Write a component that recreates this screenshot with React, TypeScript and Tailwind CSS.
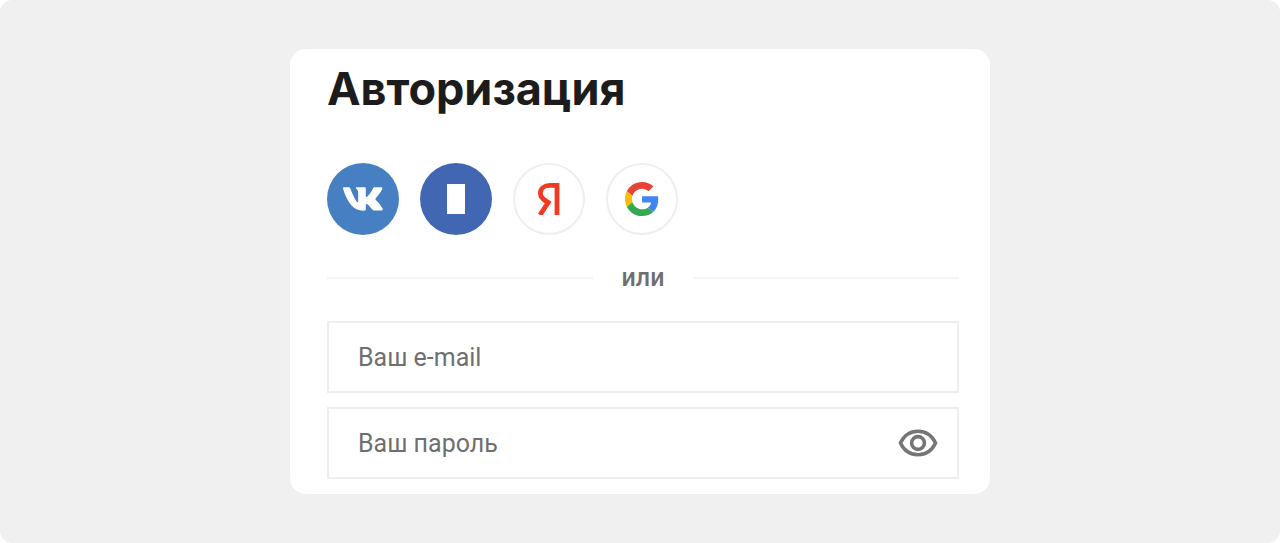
import { useState } from 'react';

const fieldClass =
  'block w-full h-[72px] border-2 border-[#eeeeee] bg-white pl-[29px] pr-20 text-[25px] text-[#6f6f6f] placeholder:text-[#6f6f6f] outline-none focus:border-[#cfcfcf]';

function VkIcon() {
  return (
    <svg className="w-10 h-6" viewBox="0 0 40 24" fill="#fff" aria-hidden="true">
      <path d="M0.8 0.3H5.6C6.6 0.3 7 0.8 7.4 1.8C9.2 6.6 11.6 11.6 13.4 14.2C14.4 15.6 15.2 15.4 15.2 13.8V5.8C15.2 3.2 14 2.6 13 1.6C12.4 1 12.8 0.3 13.8 0.3H21.4C22.4 0.3 22.8 0.8 22.8 1.8V9C22.8 10.2 23.6 10.4 24.4 9.6C26.6 7.2 28.6 4.2 30 1.4C30.4 0.6 30.8 0.3 31.6 0.3H38C39.4 0.3 39.6 1 39.2 2C38.2 4.4 35.8 7.8 33 11C32.2 12 32.2 12.4 33 13.2C35.4 15.4 38 18.6 39.4 21C40.2 22.6 39.6 23.6 38 23.6H31.8C30.4 23.6 29.8 23.2 28.8 22C27.4 20.2 25.6 18 24.2 17.2C23.2 16.8 22.8 17.2 22.8 18.4V22C22.8 23.2 22.2 23.7 20.6 23.7C15.2 23.7 10.6 21.6 7 16.6C4 12.4 1.4 7 0.2 2C-0.2 0.8 0 0.3 0.8 0.3Z" />
    </svg>
  );
}

function YandexIcon() {
  return (
    <svg className="w-6 h-8" viewBox="0 0 24 32" fill="none" stroke="#f23a22" aria-hidden="true">
      <path d="M20 32V2.4H13C7.2 2.4 3.4 5.4 3.4 10.2C3.4 13.6 5.2 15.6 8.4 17.6L11.2 19.4L3 32" strokeWidth="4.8" />
    </svg>
  );
}

function GoogleIcon() {
  return (
    <svg className="w-[34px] h-[34px]" viewBox="0 0 48 48" aria-hidden="true">
      <path fill="#ea4335" d="M24 9.5c3.54 0 6.71 1.22 9.21 3.6l6.85-6.85C35.9 2.38 30.47 0 24 0 14.62 0 6.51 5.38 2.56 13.22l7.98 6.19C12.43 13.72 17.74 9.5 24 9.5z" />
      <path fill="#4285f4" d="M46.98 24.55c0-1.57-.15-3.09-.38-4.55H24v9.02h12.94c-.58 2.96-2.26 5.48-4.78 7.18l7.73 6c4.51-4.18 7.09-10.36 7.09-17.65z" />
      <path fill="#fbbc05" d="M10.53 28.59c-.48-1.45-.76-2.99-.76-4.59s.27-3.14.76-4.59l-7.98-6.19C.92 16.46 0 20.12 0 24c0 3.88.92 7.54 2.56 10.78l7.97-6.19z" />
      <path fill="#34a853" d="M24 48c6.48 0 11.93-2.13 15.89-5.81l-7.73-6c-2.15 1.45-4.92 2.3-8.16 2.3-6.26 0-11.57-4.22-13.47-9.91l-7.98 6.19C6.51 42.62 14.62 48 24 48z" />
    </svg>
  );
}

function EyeIcon() {
  return (
    <svg className="w-10 h-7" viewBox="0 0 40 28" fill="none" stroke="#757575" strokeWidth="3.6" aria-hidden="true">
      <path d="M2.4 14C6 6.6 12.4 2.2 20 2.2S34 6.6 37.6 14C34 21.4 27.6 25.8 20 25.8S6 21.4 2.4 14Z" strokeLinejoin="round" />
      <circle cx="20" cy="14" r="6.4" />
    </svg>
  );
}

const providers = [
  { name: 'VK', className: 'bg-[#4680c2]', icon: <VkIcon /> },
  { name: 'Facebook', className: 'bg-[#4267b2]', icon: <span className="w-[18px] h-[30px] bg-white" /> },
  { name: 'Yandex', className: 'bg-white border-2 border-[#efefef]', icon: <YandexIcon /> },
  { name: 'Google', className: 'bg-white border-2 border-[#efefef]', icon: <GoogleIcon /> },
];

export default function App() {
  const [visible, setVisible] = useState(false);

  return (
    <main className="min-h-screen flex items-center justify-center rounded-xl bg-[#f0f0f0] font-['Roboto',sans-serif]">
      <form
        className="w-full max-w-[700px] rounded-2xl bg-white pt-4 pb-[15px] pl-[37px] pr-[31px]"
        onSubmit={(e) => e.preventDefault()}
      >
        <h1 className="font-['Inter',sans-serif] text-[45px] leading-[48px] font-bold text-[#1c1c1c]">
          Авторизация
        </h1>

        <div className="mt-[50px] flex gap-[21px]">
          {providers.map((provider) => (
            <button
              key={provider.name}
              type="button"
              aria-label={provider.name}
              className={`flex w-[72px] h-[72px] items-center justify-center rounded-full ${provider.className}`}
            >
              {provider.icon}
            </button>
          ))}
        </div>

        <div className="my-[27px] flex items-center gap-[29px] text-[25px] leading-8 text-[#6f6f6f]">
          <span className="h-0.5 flex-1 bg-[#f3f3f3]" />
          <span className="font-medium">или</span>
          <span className="h-0.5 flex-1 bg-[#f3f3f3]" />
        </div>

        <div className="flex flex-col gap-[14px]">
          <input type="email" aria-label="Ваш e-mail" placeholder="Ваш e-mail" className={fieldClass} />
          <div className="relative">
            <input
              type={visible ? 'text' : 'password'}
              aria-label="Ваш пароль"
              placeholder="Ваш пароль"
              className={fieldClass}
            />
            <button
              type="button"
              aria-label="Показать пароль"
              onClick={() => setVisible(!visible)}
              className="absolute inset-y-0 right-[21px] flex items-center"
            >
              <EyeIcon />
            </button>
          </div>
        </div>
      </form>
    </main>
  );
}
